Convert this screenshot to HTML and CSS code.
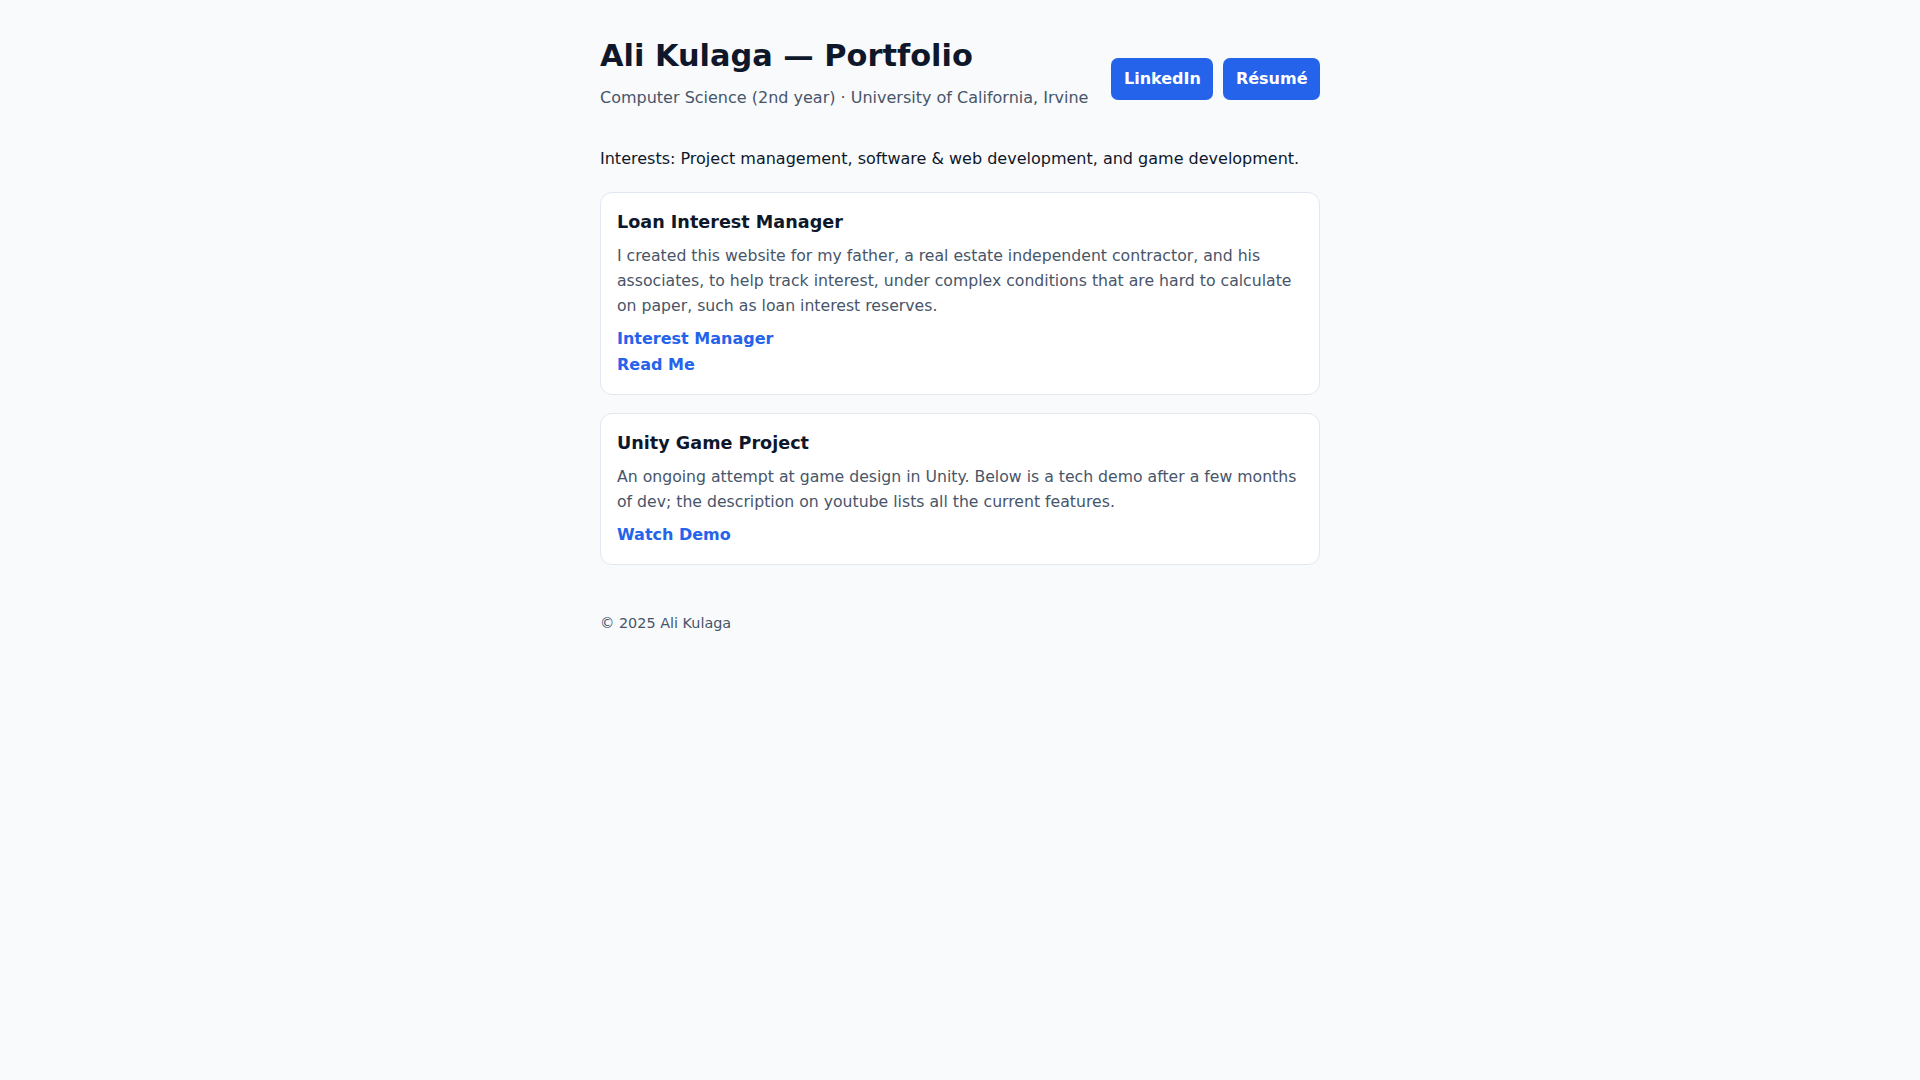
FILE: index.html
```html
<!DOCTYPE html>
<html lang="en">
<head>
<meta charset="utf-8">
<title>Ali Kulaga — Portfolio</title>
<link rel="stylesheet" href="styles.css">
</head>
<body>
<main class="page">
  <header class="site-header">
    <div class="intro">
      <h1 class="name">Ali Kulaga — Portfolio</h1>
      <p class="subtitle">Computer Science (2nd year) · University of California, Irvine</p>
    </div>
    <nav class="actions">
      <a class="btn" href="#">LinkedIn</a>
      <a class="btn" href="#">Résumé</a>
    </nav>
  </header>

  <p class="interests">Interests: Project management, software &amp; web development, and game development.</p>

  <section class="projects">
    <article class="card">
      <h3 class="card-title">Loan Interest Manager</h3>
      <p class="card-text">I created this website for my father, a real estate independent contractor, and his associates, to help track interest, under complex conditions that are hard to calculate on paper, such as loan interest reserves.</p>
      <div class="links">
        <a class="link" href="#">Interest Manager</a>
        <a class="link" href="#">Read Me</a>
      </div>
    </article>
    <article class="card">
      <h3 class="card-title">Unity Game Project</h3>
      <p class="card-text">An ongoing attempt at game design in Unity. Below is a tech demo after a few months of dev; the description on youtube lists all the current features.</p>
      <div class="links">
        <a class="link" href="#">Watch Demo</a>
      </div>
    </article>
  </section>

  <footer class="site-footer">© 2025 Ali Kulaga</footer>
</main>
</body>
</html>
```
FILE: styles.css
```css
html, body {
  margin: 0;
  padding: 0;
  background: #f8fafc;
}

body {
  font-family: "DejaVu Sans", Verdana, sans-serif;
  font-size: 16px;
  line-height: 1.6;
  color: #0f172a;
}

.page {
  max-width: 720px;
  margin: 0 auto;
  padding: 38px 0 40px;
}

.site-header {
  display: flex;
  justify-content: space-between;
  align-items: center;
  gap: 16px;
  margin-bottom: 26px;
}

.name {
  margin: 0;
  font-size: 30.4px;
  line-height: 1.2;
  font-weight: 700;
  color: #0f172a;
}

.subtitle {
  margin: 11px 0 9px;
  color: #475569;
}

.actions {
  display: flex;
  gap: 10px;
}

.btn {
  display: inline-block;
  background: #2563eb;
  color: #ffffff;
  font-weight: 700;
  text-decoration: none;
  padding: 8px 12.5px;
  border-radius: 7px;
}

.interests {
  margin: 0 0 20px;
  color: #0f172a;
}

.projects {
  display: flex;
  flex-direction: column;
  gap: 18px;
}

.card {
  background: #ffffff;
  border: 1px solid #e2e8f0;
  border-radius: 12px;
  padding: 16px;
}

.card-title {
  margin: 0 0 8px;
  font-size: 17.6px;
  line-height: 1.5;
  font-weight: 700;
  color: #0f172a;
}

.card-text {
  margin: 0 0 8px;
  font-size: 15.7px;
  line-height: 1.6;
  color: #475569;
}

.links {
  display: flex;
  flex-direction: column;
  align-items: flex-start;
}

.link {
  color: #2563eb;
  font-weight: 700;
  text-decoration: none;
}

.site-footer {
  margin-top: 47px;
  font-size: 14.4px;
  color: #475569;
}
```
